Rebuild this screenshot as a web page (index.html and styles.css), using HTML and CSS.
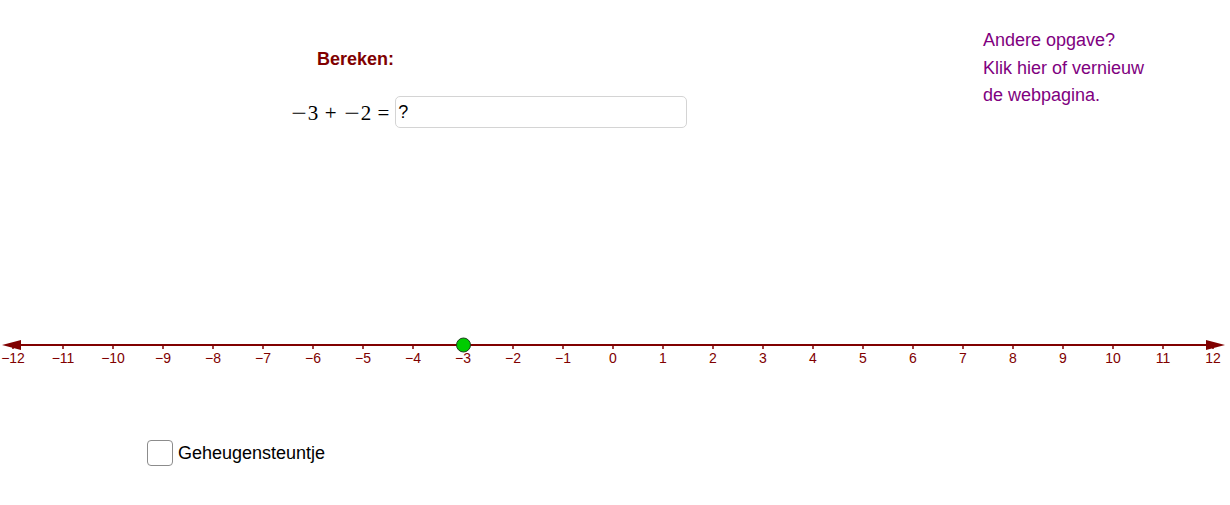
FILE: index.html
```html
<!DOCTYPE html>
<html lang="nl">
<head>
    <meta charset="UTF-8">
    <meta name="viewport" content="width=device-width, initial-scale=1.0">
    <title>Optellen op de getallenlijn</title>
    <link rel="stylesheet" href="styles.css">
</head>
<body>

<div class="applet">
    <!-- opgave + link naar nieuwe opgave -->
    <div class="top">
        <div class="task">
            <div class="title">Bereken:</div>
            <div class="sum">
                <span class="math"><span class="neg">−</span>3<span class="op">+</span><span class="neg">−</span>2<span class="rel">=</span></span>
                <input type="text" class="answer" value="?">
            </div>
        </div>
        <div class="hint">
            Andere opgave?<br>
            Klik hier of vernieuw<br>
            de webpagina.
        </div>
    </div>

    <!-- getallenlijn -->
    <svg class="axis" id="axis" width="1230" height="40" viewBox="0 0 1230 40">
        <line x1="10" y1="15" x2="1215" y2="15" stroke="#800000" stroke-width="2"/>
        <polygon points="2,15 21,10 21,20" fill="#800000"/>
        <polygon points="1225,15 1206,10 1206,20" fill="#800000"/>
        <g id="ticks"></g>
        <circle cx="463.5" cy="15" r="7" fill="#00cc00" stroke="#1f3f1f" stroke-width="1"/>
    </svg>

    <label class="memo">
        <span class="box"></span>
        <span class="memo-text">Geheugensteuntje</span>
    </label>
</div>

<script>
    // streepjes en getallen onder de lijn
    const ticks = document.getElementById('ticks');
    const ns = 'http://www.w3.org/2000/svg';
    for (let n = -12; n <= 12; n++) {
        const x = 613 + n * 50;
        const tick = document.createElementNS(ns, 'line');
        tick.setAttribute('x1', x);
        tick.setAttribute('x2', x);
        tick.setAttribute('y1', 15);
        tick.setAttribute('y2', 19);
        tick.setAttribute('stroke', '#800000');
        tick.setAttribute('stroke-width', '1.5');
        ticks.appendChild(tick);

        const label = document.createElementNS(ns, 'text');
        label.setAttribute('x', x);
        label.setAttribute('y', 33);
        label.setAttribute('class', 'num');
        label.textContent = n < 0 ? '−' + Math.abs(n) : String(n);
        ticks.appendChild(label);
    }
</script>

</body>
</html>
```

FILE: styles.css
```css
body {
    margin: 0;
    background: #ffffff;
    font-family: "Liberation Sans", Arial, sans-serif;
    color: #000;
}
.applet {
    width: 1230px;
    height: 505px;
    overflow: hidden;
}
.top {
    display: grid;
    grid-template-columns: 693px 1fr;
    height: 330px;
    box-sizing: border-box;
    padding-left: 290px;
    padding-top: 27px;
}
.task {
    padding-top: 22px;
}
.title {
    margin-left: 27px;
    font-size: 18px;
    font-weight: bold;
    color: #800000;
}
.sum {
    display: flex;
    align-items: center;
    margin-top: 26px;
}
.math {
    font-family: "Liberation Serif", "Times New Roman", serif;
    font-size: 21px;
    padding-top: 2px;
}
.neg {
    display: inline-block;
    transform: scaleX(1.3);
    margin: 0 3px;
}
.op {
    margin: 0 0.3em;
}
.rel {
    margin: 0 6px 0 0.3em;
}
.answer {
    width: 292px;
    height: 32px;
    box-sizing: border-box;
    border: 1px solid #d4d4d4;
    border-radius: 5px;
    padding: 0 2px;
    font-family: "Liberation Sans", Arial, sans-serif;
    font-size: 18px;
    color: #000;
    outline: none;
}
.hint {
    font-size: 18px;
    line-height: 27.5px;
    color: #800080;
}
.axis {
    display: block;
}
.num {
    font-family: "Liberation Sans", Arial, sans-serif;
    font-size: 14px;
    fill: #800000;
    text-anchor: middle;
}
.memo {
    display: flex;
    align-items: center;
    margin: 70px 0 0 147px;
}
.box {
    width: 26px;
    height: 26px;
    box-sizing: border-box;
    border: 1px solid #8c8c8c;
    border-radius: 4px;
}
.memo-text {
    margin-left: 5px;
    font-size: 18px;
}
```
